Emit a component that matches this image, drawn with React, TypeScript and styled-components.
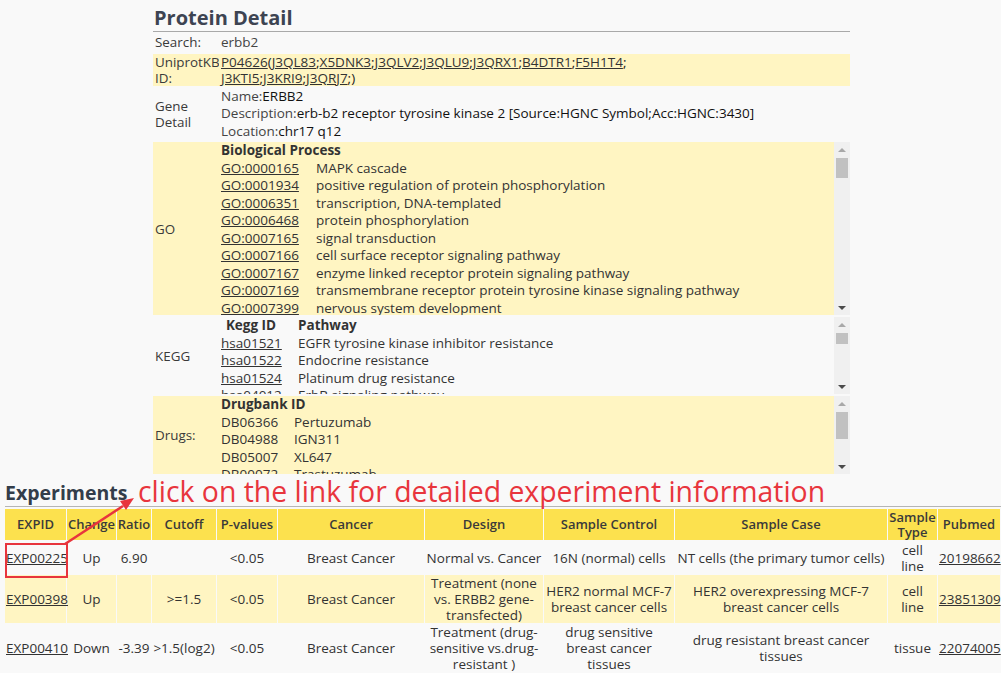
import { FC, Fragment, ReactNode } from 'react';
import styled, { createGlobalStyle } from 'styled-components';

const GlobalStyle = createGlobalStyle`
  html, body {
    margin: 0;
    padding: 0;
    background: #f9f9f9;
    font-family: "Open Sans", "DejaVu Sans", sans-serif;
    color: #333;
    overflow: hidden;
  }
  a {
    color: #333;
    text-decoration: underline;
  }
`;

const Page = styled.div`
  width: 1001px;
  padding-top: 5px;
`;

const Detail = styled.div`
  margin-left: 153px;
  width: 697px;
`;

const Title = styled.h2`
  margin: 0;
  font-size: 20px;
  line-height: 26px;
  font-weight: 700;
  color: #3d4452;
  padding-left: 1px;
  border-bottom: 1px solid #a9a9a9;
`;

const DetailTable = styled.div`
  display: grid;
  grid-template-columns: 66px 1fr;
  column-gap: 2px;
  row-gap: 2px;
  margin-top: 2px;
  font-size: 13.5px;
  line-height: 17.5px;
`;

const Label = styled.div<{ $yellow?: boolean; $center?: boolean }>`
  background: ${(p) => (p.$yellow ? '#fff5c2' : 'transparent')};
  padding-left: 2px;
  display: flex;
  align-items: ${(p) => (p.$center ? 'center' : 'flex-start')};
  line-height: 16px;
  font-size: 13.4px;
  color: #3a3a3a;
`;

const Value = styled.div<{ $yellow?: boolean; $tight?: boolean }>`
  background: ${(p) => (p.$yellow ? '#fff5c2' : 'transparent')};
  margin-left: -2px;
  padding-left: 2px;
  color: #222;
  line-height: ${(p) => (p.$tight ? '16px' : '17.5px')};
  b {
    font-weight: 400;
    color: #111;
  }
`;

const Plain = styled.span`
  color: #444;
`;

/* fake scroll box: clipped content + drawn scrollbar */
const ScrollFrame = styled.div<{ $h: number }>`
  display: flex;
  height: ${(p) => p.$h}px;
`;

const ScrollContent = styled.div`
  flex: 1;
  overflow: hidden;
`;

const ScrollBar = styled.div`
  width: 16px;
  background: #f0f0f0;
  display: flex;
  flex-direction: column;
  align-items: center;
`;

const ArrowBtn = styled.div<{ $down?: boolean }>`
  height: 15px;
  width: 16px;
  display: flex;
  align-items: center;
  justify-content: center;
  &::after {
    content: '';
    width: 0;
    height: 0;
    border-left: 4px solid transparent;
    border-right: 4px solid transparent;
    ${(p) =>
      p.$down ? 'border-top: 4px solid #4a4a4a;' : 'border-bottom: 4px solid #a8a8a8;'}
  }
`;

const Track = styled.div`
  flex: 1;
  width: 12px;
`;

const Thumb = styled.div<{ $h: number }>`
  height: ${(p) => p.$h}px;
  margin-top: 1px;
  background: #c1c1c1;
`;

const Scroller: FC<{ h: number; thumb: number; children: ReactNode }> = ({ h, thumb, children }) => (
  <ScrollFrame $h={h}>
    <ScrollContent>{children}</ScrollContent>
    <ScrollBar>
      <ArrowBtn />
      <Track>
        <Thumb $h={thumb} />
      </Track>
      <ArrowBtn $down />
    </ScrollBar>
  </ScrollFrame>
);

const ListGrid = styled.div<{ $id: number; $gap?: number }>`
  display: grid;
  grid-template-columns: ${(p) => p.$id}px 1fr;
  column-gap: ${(p) => p.$gap ?? 0}px;
  color: #333;
`;

const ListHead = styled.div<{ $center?: boolean }>`
  font-weight: 700;
  color: #333;
  text-align: ${(p) => (p.$center ? 'center' : 'left')};
`;

const Experiments = styled.section`
  margin-top: 4px;
  padding: 0 0 0 5px;
`;

const SectionHead = styled.div`
  position: relative;
  border-bottom: 1px solid #b5b5b5;
  height: 28px;
`;

const SectionTitle = styled.h3`
  margin: 0;
  padding-top: 2px;
  font-size: 19.5px;
  line-height: 26px;
  font-weight: 700;
  color: #333d4a;
`;

const Callout = styled.div`
  position: absolute;
  left: 133px;
  top: -4px;
  font-family: "Open Sans", "Liberation Sans", sans-serif;
  font-size: 28.4px;
  line-height: 34px;
  color: #e8353d;
  white-space: nowrap;
`;

const Arrow = styled.svg`
  position: absolute;
  left: 0;
  top: 0;
  overflow: visible;
  pointer-events: none;
`;

const ExpTable = styled.table`
  width: 997px;
  margin-top: 1px;
  margin-left: -1px;
  border-collapse: separate;
  border-spacing: 1px;
  table-layout: fixed;
  font-size: 13.5px;
  line-height: 16px;
  color: #333;
`;

const Th = styled.th`
  background: #fce14e;
  font-weight: 600;
  font-size: 13px;
  color: #3a3a3a;
  height: 31px;
  padding: 0;
  line-height: 15px;
`;

const Tr = styled.tr<{ $yellow?: boolean }>`
  background: ${(p) => (p.$yellow ? '#fff5c2' : '#f9f9f9')};
`;

const Td = styled.td<{ $left?: boolean }>`
  text-align: ${(p) => (p.$left ? 'left' : 'center')};
  padding: 0 1px;
  height: 33px;
`;

const Cell = styled.div`
  position: relative;
`;

const Highlight = styled.div`
  position: absolute;
  left: -1px;
  top: -7px;
  width: 59px;
  height: 31px;
  border: 2px solid #e8353d;
`;

const goTerms: [string, string][] = [
  ['GO:0000165', 'MAPK cascade'],
  ['GO:0001934', 'positive regulation of protein phosphorylation'],
  ['GO:0006351', 'transcription, DNA-templated'],
  ['GO:0006468', 'protein phosphorylation'],
  ['GO:0007165', 'signal transduction'],
  ['GO:0007166', 'cell surface receptor signaling pathway'],
  ['GO:0007167', 'enzyme linked receptor protein signaling pathway'],
  ['GO:0007169', 'transmembrane receptor protein tyrosine kinase signaling pathway'],
  ['GO:0007399', 'nervous system development'],
  ['GO:0007422', 'peripheral nervous system development'],
  ['GO:0007507', 'heart development'],
];

const keggPaths: [string, string][] = [
  ['hsa01521', 'EGFR tyrosine kinase inhibitor resistance'],
  ['hsa01522', 'Endocrine resistance'],
  ['hsa01524', 'Platinum drug resistance'],
  ['hsa04012', 'ErbB signaling pathway'],
  ['hsa04015', 'Rap1 signaling pathway'],
];

const drugs: [string, string][] = [
  ['DB06366', 'Pertuzumab'],
  ['DB04988', 'IGN311'],
  ['DB05007', 'XL647'],
  ['DB00072', 'Trastuzumab'],
  ['DB01259', 'Lapatinib'],
];

const uniprotA = ['J3QL83', 'X5DNK3', 'J3QLV2', 'J3QLU9', 'J3QRX1', 'B4DTR1', 'F5H1T4'];
const uniprotB = ['J3KTI5', 'J3KRI9', 'J3QRJ7'];

type Exp = {
  id: string;
  change: string;
  ratio: string;
  cutoff: string;
  p: string;
  cancer: string;
  design: string;
  control: string;
  sample: string;
  type: string;
  pubmed: string;
};

const experiments: Exp[] = [
  {
    id: 'EXP00225', change: 'Up', ratio: '6.90', cutoff: '', p: '<0.05', cancer: 'Breast Cancer',
    design: 'Normal vs. Cancer', control: '16N (normal) cells', sample: 'NT cells (the primary tumor cells)',
    type: 'cell line', pubmed: '20198662',
  },
  {
    id: 'EXP00398', change: 'Up', ratio: '', cutoff: '>=1.5', p: '<0.05', cancer: 'Breast Cancer',
    design: 'Treatment (none vs. ERBB2 gene-transfected)', control: 'HER2 normal MCF-7 breast cancer cells',
    sample: 'HER2 overexpressing MCF-7 breast cancer cells', type: 'cell line', pubmed: '23851309',
  },
  {
    id: 'EXP00410', change: 'Down', ratio: '-3.39', cutoff: '>1.5(log2)', p: '<0.05', cancer: 'Breast Cancer',
    design: 'Treatment (drug-sensitive vs.drug-resistant )', control: 'drug sensitive breast cancer tissues',
    sample: 'drug resistant breast cancer tissues', type: 'tissue', pubmed: '22074005',
  },
];

const cols = [61, 49, 34, 64, 60, 146, 118, 130, 212, 49, 62];
const heads = ['EXPID', 'Change', 'Ratio', 'Cutoff', 'P-values', 'Cancer', 'Design', 'Sample Control', 'Sample Case', 'Sample Type', 'Pubmed'];

const IdList: FC<{ rows: [string, string][]; link?: boolean }> = ({ rows, link }) => (
  <>
    {rows.map(([id, name]) => (
      <Fragment key={id}>
        {link ? <a>{id}</a> : <span>{id}</span>}
        <span>{name}</span>
      </Fragment>
    ))}
  </>
);

const App: FC = () => (
  <Page>
    <GlobalStyle />
    <Detail>
      <Title>Protein Detail</Title>
      <DetailTable>
        <Label>Search:</Label>
        <Value><Plain>erbb2</Plain></Value>

        <Label $yellow>UniprotKB ID:</Label>
        <Value $yellow $tight>
          <a>P04626</a>(
          {uniprotA.map((u) => (
            <span key={u}><a>{u}</a>;</span>
          ))}
          <br />
          {uniprotB.map((u) => (
            <span key={u}><a>{u}</a>;</span>
          ))}
          )
        </Value>

        <Label $center>Gene Detail</Label>
        <Value>
          <div><Plain>Name:</Plain><b>ERBB2</b></div>
          <div><Plain>Description:</Plain><b>erb-b2 receptor tyrosine kinase 2 [Source:HGNC Symbol;Acc:HGNC:3430]</b></div>
          <div><Plain>Location:</Plain><b>chr17 q12</b></div>
        </Value>

        <Label $yellow $center>GO</Label>
        <Value $yellow>
          <Scroller h={173} thumb={20}>
            <ListHead>Biological Process</ListHead>
            <ListGrid $id={95}>
              <IdList rows={goTerms} link />
            </ListGrid>
          </Scroller>
        </Value>

        <Label $center>KEGG</Label>
        <Value>
          <Scroller h={77} thumb={11}>
            <ListGrid $id={60} $gap={17}>
              <ListHead $center>Kegg ID</ListHead>
              <ListHead>Pathway</ListHead>
              <IdList rows={keggPaths} link />
            </ListGrid>
          </Scroller>
        </Value>

        <Label $yellow $center>Drugs:</Label>
        <Value $yellow>
          <Scroller h={78} thumb={27}>
            <ListHead>Drugbank ID</ListHead>
            <ListGrid $id={73}>
              <IdList rows={drugs} />
            </ListGrid>
          </Scroller>
        </Value>
      </DetailTable>
    </Detail>

    <Experiments>
      <SectionHead>
        <SectionTitle>Experiments</SectionTitle>
        <Callout>click on the link for detailed experiment information</Callout>
        <Arrow width="1" height="1">
          <line x1="60" y1="66" x2="118" y2="28" stroke="#e8353d" strokeWidth="2.5" />
          <polygon points="129,20 121,32 115,23" fill="#e8353d" />
        </Arrow>
      </SectionHead>
      <ExpTable>
        <colgroup>
          {cols.map((w, i) => (
            <col key={i} style={{ width: w }} />
          ))}
        </colgroup>
        <thead>
          <tr>
            {heads.map((h) => (
              <Th key={h}>{h}</Th>
            ))}
          </tr>
        </thead>
        <tbody>
          {experiments.map((e, i) => (
            <Tr key={e.id} $yellow={i % 2 === 1}>
              <Td $left>
                <Cell>
                  <a>{e.id}</a>
                  {i === 0 && <Highlight />}
                </Cell>
              </Td>
              <Td>{e.change}</Td>
              <Td>{e.ratio}</Td>
              <Td>{e.cutoff}</Td>
              <Td>{e.p}</Td>
              <Td>{e.cancer}</Td>
              <Td>{e.design}</Td>
              <Td>{e.control}</Td>
              <Td>{e.sample}</Td>
              <Td>{e.type}</Td>
              <Td><a>{e.pubmed}</a></Td>
            </Tr>
          ))}
        </tbody>
      </ExpTable>
    </Experiments>
  </Page>
);

export default App;
